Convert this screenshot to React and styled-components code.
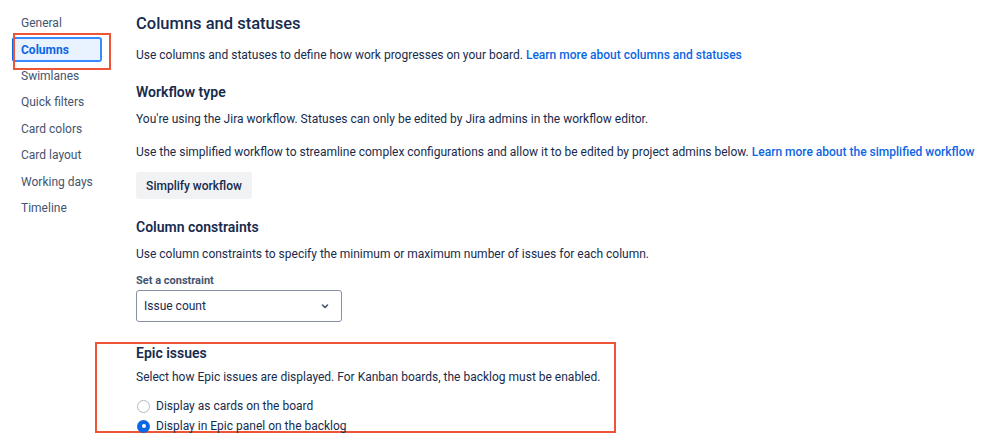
import React from "react";
import styled, { createGlobalStyle, css } from "styled-components";

const Global = createGlobalStyle`
  html, body { margin: 0; padding: 0; background: #fff; }
  body { font-family: Roboto, "Noto Sans", sans-serif; color: #172b4d; -webkit-font-smoothing: antialiased; }
  * { box-sizing: border-box; }
`;

const Page = styled.div`
  display: flex;
  width: 999px;
  height: 444px;
  overflow: hidden;
`;

const Sidebar = styled.nav`
  width: 136px;
  flex-shrink: 0;
  padding-top: 10px;
  display: flex;
  flex-direction: column;
`;

const NavItem = styled.div`
  position: relative;
  margin-left: 12px;
  width: 90px;
  height: 26.4px;
  padding-left: 7px;
  border: 2px solid transparent;
  border-radius: 3px;
  display: flex;
  align-items: center;
  font-size: 12px;
  color: #44546f;
  white-space: nowrap;
  ${(p) =>
    p.$active &&
    css`
      height: 25.4px;
      margin-top: 0.5px;
      margin-bottom: 0.5px;
      background: #e9f2ff;
      border-color: #388bff;
      border-left: 3px solid #0c66e4;
      padding-left: 6px;
      color: #0c66e4;
      font-weight: 700;
    `}
`;

const Highlight = styled.span`
  position: absolute;
  left: -2px;
  top: -6px;
  width: 98px;
  height: 37px;
  border: 2px solid #ee5536;
  pointer-events: none;
`;

const Main = styled.main`
  flex: 1;
  padding-top: 10px;
  display: flex;
  flex-direction: column;
  align-items: flex-start;
`;

const Title = styled.h1`
  margin: 0;
  font-size: 16.5px;
  line-height: 28px;
  font-weight: 500;
  color: #172b4d;
`;

const Heading = styled.h2`
  margin: ${(p) => p.$mt || 0}px 0 0;
  font-size: 14px;
  line-height: 20px;
  font-weight: 600;
  color: #172b4d;
`;

const Text = styled.p`
  margin: ${(p) => p.$mt || 0}px 0 0;
  font-size: 12px;
  line-height: 20px;
  color: #172b4d;
  white-space: nowrap;
`;

const Link = styled.a`
  color: #0c66e4;
  font-weight: 500;
  text-decoration: none;
`;

const Button = styled.button`
  margin-top: 10px;
  height: 27px;
  width: 116px;
  border: none;
  border-radius: 3px;
  background: #f1f2f4;
  font-family: inherit;
  font-size: 12px;
  font-weight: 500;
  color: #172b4d;
  padding: 0;
`;

const Label = styled.label`
  margin-top: 9px;
  font-size: 11px;
  line-height: 16px;
  font-weight: 700;
  color: #44546f;
`;

const Select = styled.div`
  margin-top: 1px;
  width: 206px;
  height: 32px;
  border: 1px solid #8590a2;
  border-radius: 3px;
  display: flex;
  align-items: center;
  justify-content: space-between;
  padding: 0 11px 0 7px;
  font-size: 12px;
  color: #172b4d;
`;

const EpicBox = styled.section`
  margin-top: 20px;
  margin-left: -41px;
  width: 521px;
  border: 2px solid #ee5536;
  padding: 0 0 0 39px;
  display: flex;
  flex-direction: column;
  align-items: flex-start;
`;

const RadioGroup = styled.div`
  margin-top: 10px;
  margin-bottom: -4px;
  display: flex;
  flex-direction: column;
  gap: 2px;
`;

const RadioRow = styled.div`
  display: flex;
  align-items: center;
  gap: 6px;
  height: 18px;
  padding-left: 1px;
  font-size: 12px;
  color: #172b4d;
`;

const RadioDot = styled.span`
  width: 13px;
  height: 13px;
  border-radius: 50%;
  flex-shrink: 0;
  ${(p) =>
    p.$checked
      ? css`
          background: #0c66e4;
          display: flex;
          align-items: center;
          justify-content: center;
          &::after {
            content: "";
            width: 4px;
            height: 4px;
            border-radius: 50%;
            background: #fff;
          }
        `
      : css`
          border: 1.5px solid #b3b9c4;
          background: #fff;
        `}
`;

const navItems = [
  "General",
  "Columns",
  "Swimlanes",
  "Quick filters",
  "Card colors",
  "Card layout",
  "Working days",
  "Timeline",
];

export default function App() {
  return (
    <>
      <Global />
      <Page>
        <Sidebar>
          {navItems.map((n) => (
            <NavItem key={n} $active={n === "Columns"}>
              {n}
              {n === "Columns" && <Highlight />}
            </NavItem>
          ))}
        </Sidebar>
        <Main>
          <Title>Columns and statuses</Title>
          <Text $mt={7}>
            Use columns and statuses to define how work progresses on your board.{" "}
            <Link href="#">Learn more about columns and statuses</Link>
          </Text>
          <Heading $mt={17}>Workflow type</Heading>
          <Text $mt={7}>
            You're using the Jira workflow. Statuses can only be edited by Jira admins in the workflow editor.
          </Text>
          <Text $mt={13}>
            Use the simplified workflow to streamline complex configurations and allow it to be edited by project admins below.{" "}
            <Link href="#">Learn more about the simplified workflow</Link>
          </Text>
          <Button>Simplify workflow</Button>
          <Heading $mt={18}>Column constraints</Heading>
          <Text $mt={7}>
            Use column constraints to specify the minimum or maximum number of issues for each column.
          </Text>
          <Label>Set a constraint</Label>
          <Select>
            <span>Issue count</span>
            <svg width="10" height="10" viewBox="0 0 10 10">
              <path d="M2.5 4 L5 6.5 L7.5 4" fill="none" stroke="#44546f" strokeWidth="1.6" strokeLinecap="round" strokeLinejoin="round" />
            </svg>
          </Select>
          <EpicBox>
            <Heading $mt={-1}>Epic issues</Heading>
            <Text $mt={4}>
              Select how Epic issues are displayed. For Kanban boards, the backlog must be enabled.
            </Text>
            <RadioGroup>
              <RadioRow>
                <RadioDot />
                Display as cards on the board
              </RadioRow>
              <RadioRow>
                <RadioDot $checked />
                Display in Epic panel on the backlog
              </RadioRow>
            </RadioGroup>
          </EpicBox>
        </Main>
      </Page>
    </>
  );
}
